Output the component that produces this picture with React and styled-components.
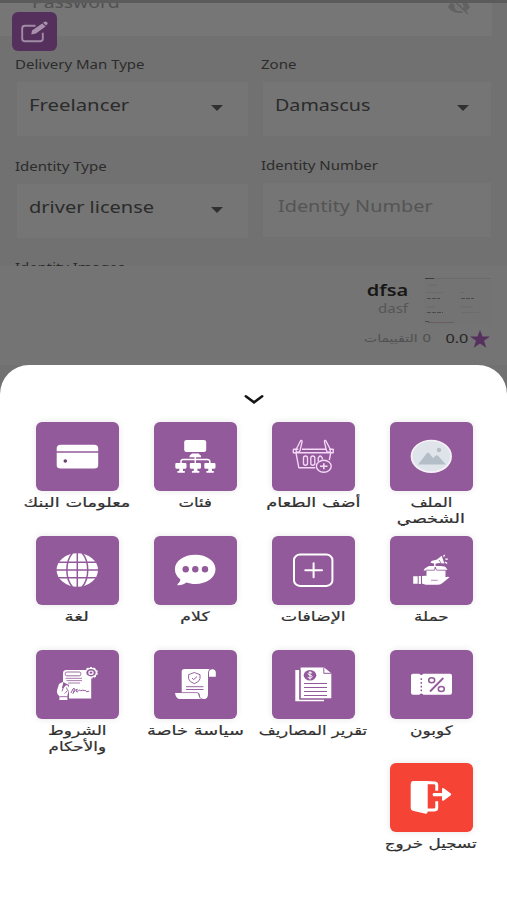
import React from 'react';
import styled, { createGlobalStyle } from 'styled-components';

const purple = '#935a9b';

const GlobalStyle = createGlobalStyle`
  * { box-sizing: border-box; }
  body { margin: 0; background: #717171; font-family: "Noto Sans", "DejaVu Sans", sans-serif; }
`;

const Screen = styled.div`
  width: 507px;
  height: 900px;
  overflow: hidden;
  display: flex;
  flex-direction: column;
  background: #717171;
  position: relative;
`;
const StatusEdge = styled.div`
  height: 3px;
  flex: none;
  background: #5b5b5b;
`;
const Form = styled.section`
  height: 263px;
  flex: none;
  overflow: hidden;
`;
const PasswordField = styled.div`
  height: 33px;
  width: 492px;
  background: #767676;
  display: flex;
  justify-content: space-between;
  padding: 0 20px 0 32px;
  svg { margin-top: -6px; }
`;
const Stretch = styled.span`
  display: inline-block;
  white-space: nowrap;
  transform: scaleX(${(p) => p.$x || 1.25});
  transform-origin: ${(p) => p.$origin || 'left'} center;
`;
const PasswordText = styled(Stretch)`
  font-size: 16px;
  line-height: 20px;
  margin-top: -11px;
  height: 20px;
  color: #515151;
`;
const EditButton = styled.button`
  position: absolute;
  left: 12px;
  top: 12px;
  width: 45px;
  height: 39px;
  padding: 0;
  border: 0;
  border-radius: 6px;
  background: #55305c;
`;
const FieldGrid = styled.div`
  display: grid;
  grid-template-columns: 234px 231px;
  column-gap: 12px;
  padding: 21px 15px 0;
`;
const Field = styled.div`
  height: 101px;
  padding-top: ${(p) => p.$top || 0}px;
`;
const FieldLabel = styled.div`
  height: 16px;
  font-size: 12px;
  line-height: 16px;
  color: #2c2c2c;
`;
const LastLabel = styled(FieldLabel)`
  padding-top: 1px;
`;
const Input = styled.div`
  height: 54px;
  margin: ${(p) => p.$gap || 9}px 1px 0 2px;
  padding: 0 ${(p) => p.$end || 25}px 8px ${(p) => p.$start || 12}px;
  display: flex;
  align-items: center;
  justify-content: space-between;
  background: #757575;
  font-size: 16px;
  line-height: 22px;
  color: ${(p) => (p.$muted ? '#545454' : '#2b2b2b')};
`;
const Caret = styled.span`
  border: 6.5px solid transparent;
  border-top: 6px solid #303030;
  border-bottom: 0;
  margin-top: 5px;
`;
const Reviewer = styled.section`
  height: 99px;
  flex: none;
  background: #747474;
  padding: 11px 16px 0 0;
  direction: rtl;
`;
const ReviewerTop = styled.div`
  display: flex;
  gap: 16px;
  height: 50px;
`;
const Thumb = styled.svg`
  width: 67px;
  height: 48px;
  display: block;
`;
const Names = styled.div`
  display: flex;
  flex-direction: column;
  align-items: flex-start;
`;
const Name = styled(Stretch)`
  font-size: 16px;
  line-height: 20px;
  font-weight: 600;
  color: #181818;
  margin-top: 3px;
`;
const Caption = styled(Stretch)`
  font-size: 12px;
  line-height: 18px;
  color: #565656;
`;
const Rating = styled.div`
  display: flex;
  align-items: center;
  height: 22px;
  color: #262626;
  font-size: 13px;
  line-height: 20px;
  svg { margin: 2px 1px 0 2px; }
`;
const Reviews = styled(Stretch)`
  font: 10.5px/20px "DejaVu Sans", sans-serif;
  color: #505050;
  margin-right: 19px;
`;
const Sheet = styled.main`
  flex: 1;
  background: #fff;
  border-radius: 29px 29px 0 0;
  padding: 27px 17px 0 18px;
`;
const Handle = styled.div`
  display: flex;
  justify-content: center;
  height: 30px;
  svg { display: block; }
`;
const Menu = styled.nav`
  display: grid;
  direction: rtl;
  grid-template-columns: repeat(4, 118px);
  grid-auto-rows: 113.8px;
`;
const MenuItem = styled.div`
  display: flex;
  flex-direction: column;
  align-items: center;
`;
const Tile = styled.div`
  width: 83px;
  height: 69px;
  flex: none;
  border-radius: 6px;
  background: ${(p) => (p.$danger ? '#f54336' : purple)};
  box-shadow: 0 0 7px rgba(0, 0, 0, 0.1);
  svg { display: block; direction: ltr; }
`;
const ItemLabel = styled.div`
  margin-top: 4px;
  display: flex;
  flex-direction: column;
  align-items: center;
  font: 500 13px/16px "DejaVu Sans", sans-serif;
  color: #303030;
  -webkit-text-stroke: 0.2px #303030;
`;

const P = purple;
const icons = {
  profile: (
    <>
      <ellipse cx="41.3" cy="34.3" rx="19.8" ry="15.8" fill="#dfe4eb" stroke="#f4f2f7" strokeWidth="1.7" />
      <path d="M28 42.5 37 31q1-1 2 0l4 5 3-2.5q1-.7 2 .3l8 8.7Z" fill="#b3bec8" />
      <circle cx="49" cy="28" r="2.2" fill="#b3bec8" />
    </>
  ),
  food: (
    <g fill="none" stroke="#f5d8f7" strokeWidth="1.35" strokeLinejoin="round">
      <path d="M21.3 27.2h5M30 27.2h24M57 27.2h4.2v3.5H21.3v-3.5M24 31l2.8 14.7h16.5M58.7 31l-1.4 7" />
      <path d="m28.8 18.5-4.6 8.8q-.6 2.6 1.4 2.9 2 .2 2.5-1.8l2-8.7q-.1-1.6-1.3-1.2ZM53.7 18.5l4.6 8.8q.6 2.6-1.4 2.9-2 .2-2.5-1.8l-2-8.7q.1-1.6 1.3-1.2Z" />
      <rect x="31.5" y="34" width="4" height="9.2" rx="2" />
      <rect x="38.8" y="34" width="4" height="9.2" rx="2" />
      <path d="M46.3 39.5V36q1.8-4 4 0v1.5" />
      <ellipse cx="51.8" cy="44.2" rx="7.4" ry="6" />
      <path d="M48 44.2h7.5M51.8 41.2v6" strokeWidth="1.6" />
    </g>
  ),
  categories: (
    <g fill="#fff">
      <rect x="30.2" y="18" width="22" height="12" rx="2.3" />
      <path d="M38 31.6h6.5l2.5 2.2v1.5H35.5v-1.5Z" />
      <path d="M41.3 34v8M27 42v-2.5q0-2 2.3-2h24q2.5 0 2.5 2V42" fill="none" stroke="#fff" strokeWidth="1.5" />
      {[26.8, 41.3, 55.8].map((x) => (
        <path key={x} d={`M${x - 4.5} 41h9q1.2 0 1.2 1.2v3q0 1.5-1.5 1.5h-2.2l.2 2.2h1.8v1.9h-7.4v-1.9h1.8l.2-2.2h-2.6q-1.5 0-1.5-1.5v-3q0-1.2 1-1.2Z`} />
      ))}
    </g>
  ),
  bank: (
    <>
      <path d="M20.7 29.2v-3q0-3.5 4-3.5h33.5q4 0 4 3.5v3ZM20.7 30.7h41.5v12.5q0 3.3-4 3.3H24.7q-4 0-4-3.3Z" fill="#fff" />
      <circle cx="29.3" cy="39" r="1.8" fill="#65436a" />
    </>
  ),
  campaign: (
    <>
      <path d="M35 32.2 39 30h5v-2.5l-3.5-.8 1-1.7 5.5-1.4 4.7-3.8 2.7 7.8-5.5-.7-3.4.8V30h5.3l4.5.8 2.2 3.2h-2v8.2l-10 1.8-9-2v-7.5h-3Z" fill="#fff" />
      <path d="m53.5 20.5 1.2-1.5M55.3 23.2h2.5M55 26l2.2 1.5" stroke="#fff" strokeWidth="1.3" />
      <path d="M36 34.2h8.7l.5-3 1.5 3h9.5M45.3 31v2M49 24l2 3" stroke={P} strokeWidth=".8" fill="none" />
      <path d="M23.2 40.3h4.5v7.5h-4.5ZM28.7 40.1h2.2v7.8h-2.2ZM32 40l4.5-.2q2 0 4 1.5h5.5q2.5 0 2.7 2l6-2q3.8-1 4.8 0l-7.3 6q-2 1.5-5 1.5H36q-2-.3-4-1.2Z" fill="#fff" />
      <path d="M41 44.3h6.7" stroke={P} strokeWidth=".7" />
    </>
  ),
  addons: (
    <g fill="none" stroke="#fff" strokeWidth="2">
      <rect x="22" y="18.6" width="38.4" height="31.3" rx="6" ry="5.3" />
      <path d="M33.3 34.3H50M41.6 27.3v14" strokeLinecap="round" />
    </g>
  ),
  chat: (
    <>
      <path d="M41.3 18.7c11.5 0 20.2 6.3 20.2 14.6S52.8 48 41.3 48c-3.3 0-6.3-.6-9-1.5-2.4 1.8-4.8 2.8-7.7 2.8-1.3 0-1.5-.9-.7-1.6 1.5-1.3 2.5-2.5 2.4-4.4-3.5-2.6-5.4-6-5.4-10 0-8.3 8.9-14.6 20.4-14.6Z" fill="#fff" />
      {[31.7, 41.3, 51].map((x) => <circle key={x} cx={x} cy="33.3" r="3.2" fill={P} />)}
    </>
  ),
  language: (
    <>
      <ellipse cx="41.3" cy="34" rx="20.7" ry="16.7" fill="#fff" />
      <g fill="none" stroke={P} strokeWidth="1.5">
        <path d="M41.3 16v36M20 34h43M22 26.3h39M22 41.7h39" />
        <path d="M36.5 17c-7.5 8.5-7.5 25.5 0 34M46.1 17c7.5 8.5 7.5 25.5 0 34" />
      </g>
    </>
  ),
  coupon: (
    <>
      <path d="M23 23.7h6.3q2 2.5 4 0H60q2 0 2 2v17q0 2-2 2H33.3q-2-2.5-4 0H23q-2 0-2-2V25.7q0-2 2-2Z" fill="#fff" />
      <g fill="none" stroke={P}>
        <path d="M31.3 28.2v13" strokeWidth="1.5" strokeDasharray="1.8 2" />
        <path d="M53.3 28 40 41.5" strokeWidth="1.8" />
        <ellipse cx="41.7" cy="30.3" rx="3" ry="2.5" strokeWidth="1.5" />
        <ellipse cx="51.3" cy="39" rx="3" ry="2.5" strokeWidth="1.5" />
      </g>
    </>
  ),
  report: (
    <>
      <path d="M23.3 20h4v29.7H52v1.6H23.3Z" fill="#fff" />
      <path d="M28.6 17.5h23.5l7.2 5.8v25H28.6Z" fill="#fff" />
      <path d="M51.8 17.5v5.8h7.5M28 20v29" fill="none" stroke={P} strokeWidth="1" />
      <ellipse cx="38" cy="25.2" rx="6.3" ry="5.3" fill={P} />
      <path d="M40.2 23q-4-1.5-4.2.7c0 1.8 4.3 1 4.2 3.1-.3 1.8-3.6 1.5-4.5.4M38 21v8.5" fill="none" stroke="#fff" strokeWidth="1" />
      <path d="M32 33.5h23M32 37.5h23M32 41.5h23M32 45.5h23" stroke={P} strokeWidth="1.1" />
    </>
  ),
  policy: (
    <>
      <path d="M30.5 19h25.2q-1.7 1.5-1.7 4v21q0 5-4 5-3.8 0-4.2-3.3-.3-3-2.4-3H27.7V21.5q0-2.5 2.8-2.5ZM55 26.7v-4q0-3.5 3.3-3.5 3.5 0 3.5 3.5v4Z" fill="#fff" />
      <path d="M21 43h22q1.5 0 1.5 2 .3 3 3 4H26q-4 0-5-6Z" fill="#fff" />
      <path d="M27.5 42.6h16q1.7.5 2 3.2" stroke={P} strokeWidth=".7" fill="none" />
      <path d="m40.3 22.5 5.7 2.2v4q-.3 3-5.7 5-5.3-2-5.7-5v-4ZM38 28l1.7 1.6 3.3-3M32 36.7h17.5M32 39.5h17.5" fill="none" stroke={P} strokeWidth=".95" />
    </>
  ),
  terms: (
    <>
      <path d="M30.5 20h24.7v28.6H33V35l-6-3V23q0-3 3.5-3Z" fill="#fff" />
      <rect x="29.3" y="22" width="15.5" height="3.8" rx="1.5" fill="none" stroke={P} strokeWidth=".9" />
      <path d="M29.5 28.3H46M30.5 30.6H46M32 33H44" stroke={P} strokeWidth=".8" />
      <path d="m35 43 2-4.2q2-1.3 1.4 1L37 43.5q2-4.2 4.2-4.3-1.5 4.4 1 2.1 1.4-2.5 2.5-.5 2.3-1.3 4.1-.2 1-.8 1.7 1.2l2.7-.7" fill="none" stroke={P} strokeWidth="1" />
      <path d="m21 40.5 2-6.5 3.5-2q1.2 0 .6 1.6L26 38l1 1 2.3-3.3q2.2-1 3.4 1 .9 2-.1 4l-1.2 5v4.2h-8V46q-2.8-2-2.4-5.5Z" fill="#fff" />
      <path d="m27 38.8-1 2.5M30.5 37.5l1 3-2.7 3M23.5 46.7h8.3" fill="none" stroke={P} strokeWidth=".9" />
      <ellipse cx="55" cy="22.7" rx="6.1" ry="5" fill="#fff" stroke="#fff" strokeWidth="1.5" strokeDasharray="2 1.5" />
      <ellipse cx="55" cy="22.7" rx="4.7" ry="3.7" fill={P} />
      <ellipse cx="55" cy="22.7" rx="2.1" ry="1.7" fill={P} stroke="#fff" strokeWidth="1.2" />
    </>
  ),
  logout: (
    <g fill="#fff">
      <path d="M22.7 18h14l8.5.5q3 .5 3 3.3v6H45.3v-5.3q0-1.3-1.4-1.3h-6.2v24.4h6q1.6 0 1.6-1.3v-6h2.9v6.8q0 3.3-3.5 3.3h-7v.4q-.3 2.7-3 1.8l-12-2.8q-2-.5-2-2.7V21q0-2.5 2-3Z" />
      <path d="M43.3 30H52v-4.2q.2-1.5 1.8-.5l7 5.3q1 .8 0 1.7l-7 5.2q-1.6 1-1.8-.7v-3.6h-8.7q-1.6-1.6 0-3.2Z" />
    </g>
  ),
};

const items = [
  { icon: 'profile', lines: [['الملف', 1.28], ['الشخصي', 1.37]] },
  { icon: 'food', lines: [['أضف الطعام', 1.37]] },
  { icon: 'categories', lines: [['فئات', 1.27]] },
  { icon: 'bank', lines: [['معلومات البنك', 1.37]] },
  { icon: 'campaign', lines: [['حملة', 1.29]] },
  { icon: 'addons', lines: [['الإضافات', 1.34]] },
  { icon: 'chat', lines: [['كلام', 1.33]] },
  { icon: 'language', lines: [['لغة', 1.42]] },
  { icon: 'coupon', lines: [['كوبون', 1.31]] },
  { icon: 'report', lines: [['تقرير المصاريف', 1.26]] },
  { icon: 'policy', lines: [['سياسة خاصة', 1.37]] },
  { icon: 'terms', lines: [['الشروط', 1.31], ['والأحكام', 1.29]] },
  { icon: 'logout', lines: [['تسجيل خروج', 1.29]], danger: true },
];

export default function App() {
  return (
    <Screen>
      <GlobalStyle />
      <StatusEdge />
      <Form>
        <PasswordField>
          <PasswordText $x={1.21}>Password</PasswordText>
          <svg width="26" height="20" viewBox="0 0 26 20">
            <path d="M2 10q4-7 11-7t11 7q-4 6-11 6T2 10Z" fill="#626262" />
            <circle cx="13" cy="9.5" r="4.5" fill="#767676" />
            <circle cx="13" cy="9.5" r="2.3" fill="#626262" />
            <path d="m4 2 17 15" stroke="#767676" strokeWidth="3" />
            <path d="m5 1 17 16" stroke="#626262" strokeWidth="1.5" />
          </svg>
        </PasswordField>
        <FieldGrid>
          <Field>
            <FieldLabel><Stretch>Delivery Man Type</Stretch></FieldLabel>
            <Input><Stretch $x={1.27}>Freelancer</Stretch><Caret /></Input>
          </Field>
          <Field>
            <FieldLabel><Stretch>Zone</Stretch></FieldLabel>
            <Input $end={22}><Stretch $x={1.23}>Damascus</Stretch><Caret /></Input>
          </Field>
          <Field $top={1}>
            <FieldLabel><Stretch>Identity Type</Stretch></FieldLabel>
            <Input><Stretch>driver license</Stretch><Caret /></Input>
          </Field>
          <Field>
            <FieldLabel><Stretch>Identity Number</Stretch></FieldLabel>
            <Input $start={15} $muted><Stretch $x={1.24}>Identity Number</Stretch></Input>
          </Field>
          <LastLabel><Stretch $x={1.24}>Identity Images</Stretch></LastLabel>
        </FieldGrid>
      </Form>
      <Reviewer>
        <ReviewerTop>
          <Thumb viewBox="0 0 67 48">
            <rect width="67" height="48" fill="#737373" />
            <path d="M1 1.5h9" stroke="#3d3d3d" />
            <path d="M10 1.5h57M4 8h9M2 15.5h17M36 15.5h4M2 30h9M36 30h13M38 35.5h17" stroke="#666" strokeWidth=".6" />
            <path d="M3 21.5h13M37 21.5h13M3 35.5h16M1 44.5h4" stroke="#4b4b4b" strokeDasharray="4 1" />
            <path d="M4 45.5h26" stroke="#685858" strokeWidth=".8" />
          </Thumb>
          <Names>
            <Name $origin="right">dfsa</Name>
            <Caption $origin="right">dasf</Caption>
          </Names>
        </ReviewerTop>
        <Rating>
          <svg width="20" height="18" viewBox="0 0 20 18"><path d="m10 0 2.5 6.5H20l-6 4.2 2.3 7L10 13.6l-6.3 4.1 2.3-7-6-4.2h7.5Z" fill="#56305e" /></svg>
          <Stretch $origin="right">0.0</Stretch>
          <Reviews $origin="right" $x={1.34}>0 التقييمات</Reviews>
        </Rating>
      </Reviewer>
      <Sheet>
        <Handle>
          <svg width="22" height="16" viewBox="0 0 22 16"><path d="m2.8 4.3 8.2 6 8.2-6" fill="none" stroke="#151515" strokeWidth="2.6" strokeLinecap="round" /></svg>
        </Handle>
        <Menu>
          {items.map((item) => (
            <MenuItem key={item.icon}>
              <Tile $danger={item.danger}>
                <svg width="83" height="69" viewBox="0 0 83 69">{icons[item.icon]}</svg>
              </Tile>
              <ItemLabel>
                {item.lines.map(([text, x]) => <Stretch key={text} $x={x} $origin="center">{text}</Stretch>)}
              </ItemLabel>
            </MenuItem>
          ))}
        </Menu>
      </Sheet>
      <EditButton aria-label="Edit">
        <svg width="45" height="39" viewBox="0 0 45 39">
          <path d="M23.5 13.7H13q-2.8 0-2.8 2.5v10.5q0 2.5 2.8 2.5h15q2.8 0 2.8-2.5v-6" fill="none" stroke="#a18ba6" strokeWidth="1.9" />
          <path d="m20 18.4 10.2-6.9 3.4 3-9.7 7-4.6.9ZM31 10.8l1.6-1q1.2-.6 2.5.4 1.2 1.2.2 2.1l-1.3 1.1Z" fill="#a991ae" />
        </svg>
      </EditButton>
    </Screen>
  );
}
